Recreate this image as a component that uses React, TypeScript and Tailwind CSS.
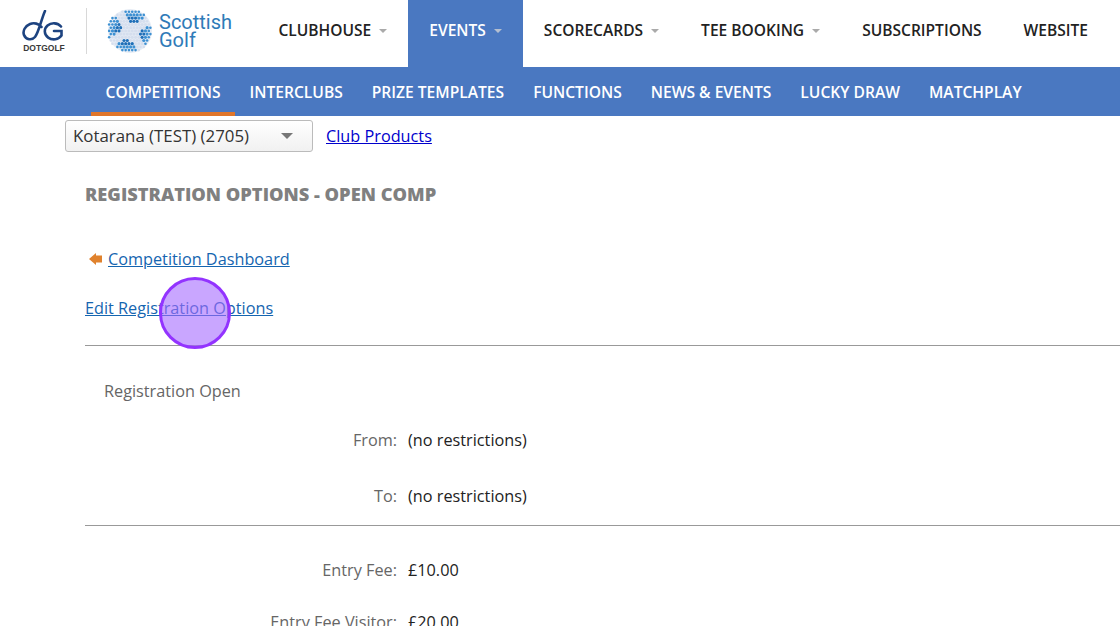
import React from 'react';

const mainNav = [
  { label: 'CLUBHOUSE', caret: true },
  { label: 'EVENTS', caret: true, active: true },
  { label: 'SCORECARDS', caret: true },
  { label: 'TEE BOOKING', caret: true },
  { label: 'SUBSCRIPTIONS' },
  { label: 'WEBSITE' },
];

const subNav = ['COMPETITIONS', 'INTERCLUBS', 'PRIZE TEMPLATES', 'FUNCTIONS', 'NEWS & EVENTS', 'LUCKY DRAW', 'MATCHPLAY'];

function DotGolfLogo() {
  return (
    <div className="flex w-[44px] flex-col items-center">
      <svg width="44" height="31" viewBox="0 0 44 31" fill="none" stroke="#1d4380" strokeWidth="2.6" strokeLinecap="round">
        <path d="M19.5 17 C17 13.5 12 12.5 8 14 C3 16 0.5 21 2 25 C4 30 10 30.5 13 27 C17 22 19 10 23 1" />
        <path d="M39 16.5 A9 8 0 1 0 39.5 25.5 V21 H32" />
      </svg>
      <span className="mt-[3px] font-['Liberation_Sans',sans-serif] text-[8.5px] leading-[9px] font-bold text-[#3a3a3a]">DOTGOLF</span>
    </div>
  );
}

function GolfBall() {
  const dots: { x: number; y: number; r: number; fill: string }[] = [];
  const tilt = (-14 * Math.PI) / 180;
  for (let row = 0; row < 15; row++) {
    for (let col = 0; col < 15; col++) {
      const x = 0.5 + col * 3.3 + (row % 2 ? 1.65 : 0);
      const y = 0.5 + row * 3.2;
      const dx = x - 23;
      const dy = y - 23;
      const dist = Math.sqrt(dx * dx + dy * dy);
      if (dist > 22) continue;
      // pale saltire across a blue ball, turned a little
      const rx = dx * Math.cos(tilt) - dy * Math.sin(tilt);
      const ry = dx * Math.sin(tilt) + dy * Math.cos(tilt);
      const band = Math.abs(Math.abs(rx) - Math.abs(ry));
      const fill = band > 6.5 ? (dist > 15 ? '#3d90d2' : '#1f6fb8') : '#d5deee';
      dots.push({ x, y, r: dist > 18 ? 1.3 : 1.6, fill });
    }
  }
  return (
    <svg width="46" height="46" viewBox="0 0 46 46">
      <circle cx="23" cy="23" r="22" fill="#e6ecf5" />
      {dots.map((d, i) => (
        <circle key={i} cx={d.x} cy={d.y} r={d.r} fill={d.fill} />
      ))}
    </svg>
  );
}

function Caret({ className }: { className: string }) {
  return <span className={`ml-[8px] inline-block h-0 w-0 border-x-[4px] border-t-[4px] border-x-transparent ${className}`} />;
}

function NavItems() {
  return (
    <>
      {mainNav.map((item) => (
        <a
          key={item.label}
          className={`flex items-center px-[21px] pb-[6px] text-[15.55px] font-semibold whitespace-nowrap ${item.active ? 'bg-[#4a78c1] text-white' : 'text-[#222]'}`}
        >
          {item.label}
          {item.caret && <Caret className={item.active ? 'border-t-[#b5bfd0]' : 'border-t-[#aaa]'} />}
        </a>
      ))}
    </>
  );
}

function DetailRow({ label, value, className }: { label: string; value: string; className: string }) {
  return (
    <div className={`flex text-[16.25px] leading-[22px] ${className}`}>
      <span className="w-[312px] text-right text-[#666]">{label}</span>
      <span className="ml-[11px] text-[#222]">{value}</span>
    </div>
  );
}

export default function App() {
  return (
    <div className="relative h-[626px] w-[1120px] overflow-hidden bg-white font-['Open_Sans',sans-serif]">
      <header className="flex h-[67px] items-stretch">
        <div className="flex w-[257.5px] items-center pb-[5px] pl-[22px]">
          <DotGolfLogo />
          <div className="ml-[20px] h-[46px] w-px bg-[#d8d8d8]" />
          <div className="ml-[20px]"><GolfBall /></div>
          <div className="ml-[6px] font-['Roboto',sans-serif] text-[20px] leading-[18px] text-[#2f7bb8]">
            <div>Scottish</div>
            <div>Golf</div>
          </div>
        </div>
        <nav className="flex items-stretch">
          <NavItems />
        </nav>
      </header>

      <div className="flex h-[49px] items-stretch bg-[#4a78c1] pl-[91px]">
        {subNav.map((item, i) => (
          <a
            key={item}
            className={`flex items-center px-[14.5px] text-[15.6px] font-semibold whitespace-nowrap text-white ${i === 0 ? 'border-b-4 border-[#e0762a] pt-[6px]' : 'pt-[2px]'}`}
          >
            {item}
          </a>
        ))}
      </div>

      <div className="flex items-center pt-1 pl-[65px]">
        <div className="flex h-[32px] w-[248px] items-center justify-between rounded-[3px] border border-[#bbb] bg-gradient-to-b from-white to-[#f1f1f1] pr-[19px] pl-[7px] text-[16.85px] text-[#333]">
          <span>Kotarana (TEST) (2705)</span>
          <span className="h-0 w-0 border-x-[6px] border-t-[6px] border-x-transparent border-t-[#777]" />
        </div>
        <a className="mt-[1px] ml-[13px] text-[16.25px] text-[#0000cc] underline">Club Products</a>
      </div>

      <main className="pl-[85px]">
        <h1 className="mt-[28px] text-[18.25px] leading-[28px] font-extrabold text-[#808080]">REGISTRATION OPTIONS - OPEN COMP</h1>

        <div className="mt-[39px] flex items-center text-[16.25px] leading-[24px]">
          <svg width="13" height="12" viewBox="0 0 13 12" className="mr-[6px] ml-[4px]">
            <path d="M0 6 L7 0 V2.5 H13 V9.5 H7 V12 Z" fill="#e0822d" />
          </svg>
          <a className="text-[#1565b0] underline">Competition Dashboard</a>
        </div>
        <div className="mt-[25px] text-[16.25px] leading-[24px]">
          <a className="text-[#1565b0] underline">Edit Registration Options</a>
        </div>

        <hr className="mt-[25px] border-t border-[#999]" />
        <div className="mt-[34px] pl-[19px] text-[16.25px] leading-[22px] text-[#666]">Registration Open</div>
        <DetailRow label="From:" value="(no restrictions)" className="mt-[27px]" />
        <DetailRow label="To:" value="(no restrictions)" className="mt-[34px]" />
        <hr className="mt-[18px] border-t border-[#999]" />
        <DetailRow label="Entry Fee:" value="£10.00" className="mt-[33px]" />
        <DetailRow label="Entry Fee Visitor:" value="£20.00" className="mt-[30px]" />
      </main>

      {/* click marker laid over the page */}
      <div className="absolute top-[277px] left-[159px] h-[72px] w-[72px] rounded-full border-[3px] border-[#9333ff] bg-[#a56bff]/60" />
    </div>
  );
}
